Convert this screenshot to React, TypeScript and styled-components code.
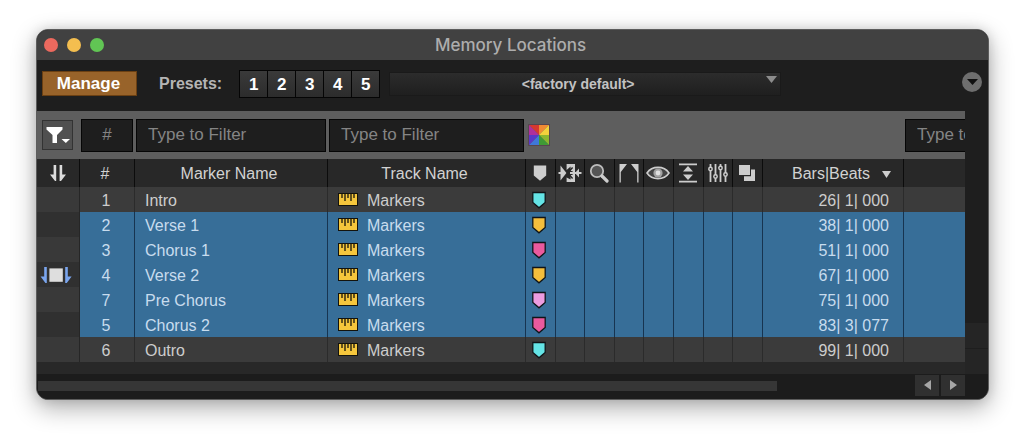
import React from "react";
import styled, { createGlobalStyle, css } from "styled-components";

const GlobalStyle = createGlobalStyle`
  *, *::before, *::after { box-sizing: border-box; }
  body {
    margin: 0;
    background: #fff;
    font-family: "Liberation Sans", Arial, sans-serif;
    font-size: 16px;
    color: #cdcdcd;
  }
  button, input, select { font: inherit; margin: 0; }
  svg { display: block; }
`;

const Page = styled.main`
  padding: 29px 35px 42px 36px;
`;

const Window = styled.section`
  overflow: hidden;
  border: 1px solid #5c5c5c;
  border-radius: 12px;
  background: #1e1e1e;
  box-shadow: 0 8px 24px rgba(0, 0, 0, 0.32), 0 0 12px rgba(0, 0, 0, 0.12);
`;

const TitleBar = styled.header`
  position: relative;
  display: flex;
  align-items: center;
  justify-content: center;
  height: 30px;
  padding-right: 4px;
  background: #414141;
`;

const Title = styled.h1`
  margin: 0;
  font: 500 17px/28px Inter, "Liberation Sans", sans-serif;
  color: #adadad;
`;

const Lights = styled.div`
  position: absolute;
  left: 7px;
  top: 8px;
  display: flex;
  gap: 9px;
`;

const Light = styled.button<{ $color: string }>`
  width: 14px;
  height: 14px;
  padding: 0;
  border: 0;
  border-radius: 50%;
  background: ${(p) => p.$color};
`;

const Toolbar = styled.div`
  display: flex;
  align-items: center;
  height: 51px;
  padding: 0 6px 4px 5px;
`;

const ManageButton = styled.button`
  width: 95px;
  height: 25px;
  padding: 0 2px 0 0;
  border: 1px solid #6b4013;
  background: #98632a;
  color: #fff;
  font-size: 17px;
  font-weight: bold;
  line-height: 23px;
`;

const PresetsLabel = styled.span`
  margin: 0 17px 0 22px;
  font-weight: bold;
  color: #b4b4b4;
`;

const PresetGroup = styled.div`
  display: flex;
  gap: 1px;
  padding: 1px;
  background: #050505;
`;

const PresetButton = styled.button`
  width: 27px;
  height: 26px;
  padding: 2px 0 0;
  border: 0;
  background: linear-gradient(#3a3a3a, #2c2c2c);
  color: #fff;
  font-size: 17px;
  font-weight: bold;
  line-height: 24px;
`;

const PresetPicker = styled.label`
  display: grid;
  flex: 0 1 392px;
  margin-left: 9px;
  > * { grid-area: 1 / 1; }
  > svg { justify-self: end; margin: 4px 4px 0 0; pointer-events: none; }
`;

const PresetSelect = styled.select`
  width: 100%;
  height: 24px;
  padding: 0 14px 0 0;
  appearance: none;
  border: 1px solid #1a1a1a;
  border-radius: 0;
  background: linear-gradient(#2c2c2c, #1f1f1f);
  color: #c2c2c2;
  font-size: 14px;
  font-weight: bold;
  text-align: center;
  text-align-last: center;
`;

const MenuButton = styled.button`
  display: grid;
  place-items: center;
  width: 20px;
  height: 20px;
  margin: 0 0 4px auto;
  padding: 0;
  border: 0;
  border-radius: 50%;
  background: #6e6e6e;
`;

const Body = styled.div`
  display: grid;
  grid-template-columns: minmax(0, 1fr) 23px;
`;

const Pane = styled.div`
  min-width: 0;
  overflow: hidden;
  padding-bottom: 12px;
  background: #282828;
`;

const Table = styled.table`
  width: 100%;
  table-layout: fixed;
  border-collapse: separate;
  border-spacing: 0;
`;

const FilterCell = styled.td<{ $gutter?: boolean }>`
  height: 48px;
  overflow: hidden;
  padding: 0 2px 0 ${(p) => (p.$gutter ? "5px" : "1px")};
  background: #5e5e5e;
  white-space: nowrap;
`;

const FilterInput = styled.input<{ $short?: boolean; $wide?: boolean }>`
  display: block;
  width: ${(p) => (p.$wide ? "188px" : "100%")};
  height: 33px;
  padding: 0 ${(p) => (p.$short ? "0" : "11px")};
  border: 1px solid #060606;
  border-radius: 0;
  background: #1e1e1e;
  color: #c8c8c8;
  font-size: 17px;
  text-align: ${(p) => (p.$short ? "center" : "left")};
  &::placeholder { color: #858585; opacity: 1; }
`;

const FilterButton = styled.button`
  display: block;
  width: 31px;
  height: 30px;
  padding: 0;
  border: 1px solid #333;
  background: #505050;
`;

const SwatchButton = styled.button`
  display: block;
  padding: 0 0 0 1px;
  border: 0;
  background: none;
`;

const HeadCell = styled.th<{ $kind?: "icon" | "sorted" }>`
  height: 28px;
  padding: ${(p) =>
    p.$kind === "sorted" ? "2px 12px 0 0" : p.$kind === "icon" ? "0 1px 0 0" : "2px 4px 0 0"};
  border-right: 1px solid #0c0c0c;
  background: #282828;
  color: #d2d2d2;
  font-weight: normal;
  &:last-child { border-right: 0; }
  svg { margin: 0 auto; }
`;

const SortButton = styled.button`
  display: flex;
  align-items: center;
  justify-content: flex-end;
  gap: 12px;
  width: 100%;
  padding: 0;
  border: 0;
  background: none;
  color: inherit;
  svg { margin: 0; }
`;

const Cell = styled.td`
  height: 25px;
  overflow: hidden;
  padding: 2px 0 0;
  border-right: 1px solid #2b2b2b;
  background: #3b3b3b;
  white-space: nowrap;
  line-height: 23px;
  &:last-child { border-right: 0; }
`;

const GutterCell = styled.td<{ $dark: boolean }>`
  height: 25px;
  padding: 0 0 0 3px;
  border-right: 1px solid #262626;
  background: ${(p) => (p.$dark ? "#303030" : "#393939")};
`;

const NumberCell = styled(Cell)`
  padding-right: 2px;
  text-align: center;
`;

const TextCell = styled(Cell)`
  padding-left: 10px;
`;

const TimeCell = styled(Cell)`
  padding-right: 14px;
  text-align: right;
`;

const IconCell = styled(Cell)`
  padding: 0 3px 0 0;
  svg { margin: 0 auto; }
`;

const Row = styled.tr<{ $selected: boolean }>`
  ${(p) =>
    p.$selected &&
    css`
      color: #c8dcee;
      ${Cell} {
        background: #376e98;
        border-right-color: #173450;
      }
    `}
`;

const Track = styled.span`
  display: flex;
  align-items: center;
  gap: 9px;
  > svg { margin-bottom: 2px; }
`;

const VerticalBar = styled.div`
  display: flex;
  flex-direction: column;
  justify-content: flex-end;
  gap: 1px;
  background: #1e1e1e;
`;

const VerticalButton = styled.button`
  height: 25px;
  padding: 0;
  border: 0;
  background: #252525;
`;

const HorizontalBar = styled.div`
  display: flex;
  align-items: center;
  gap: 2px;
  height: 25px;
  padding: 0 23px 3px 0;
  background: #1c1c1c;
`;

const Groove = styled.div`
  flex: 1;
  padding: 2px 136px 0 1px;
`;

const Thumb = styled.div`
  height: 10px;
  background: #363636;
`;

const StepButton = styled.button`
  display: grid;
  place-items: center;
  width: 24px;
  height: 21px;
  padding: 0;
  border: 0;
  background: #303030;
`;

const Chevron = ({ w, h, fill }: { w: number; h: number; fill: string }) => (
  <svg width={w} height={h} viewBox="0 0 10 6" preserveAspectRatio="none">
    <path d="M0 0H10L5 6Z" fill={fill} />
  </svg>
);

const RangeArrows = () => (
  <svg width="18" height="16" viewBox="0 0 18 16" fill="#dcdcdc">
    <path d="M4.6 0H7.2V16H6L1 9.5H4.6Z" />
    <path d="M10.6 0H13.2V9.5H17L12 16H10.6Z" />
  </svg>
);

const Playhead = () => (
  <svg width="33" height="18" viewBox="0 0 33 18">
    <path d="M4.2 1H6.8V17H5.4L0.6 10.5H4.2Z" fill="#7aa5ee" />
    <rect x="9.4" y="2.4" width="13.4" height="13.4" fill="#dedede" />
    <path d="M25.2 1H27.8V10.5H31.6L26.8 17H25.2Z" fill="#7aa5ee" />
  </svg>
);

const Marker = ({ color, outline }: { color: string; outline?: boolean }) => (
  <svg width="16" height="18" viewBox="0 0 16 18">
    <path
      d="M1.8 1.5H14.2V11.5L8 16.8L1.8 11.5Z"
      fill={color}
      stroke={outline ? "#101418" : "none"}
      strokeWidth="1.3"
    />
  </svg>
);

const Ruler = () => (
  <svg width="20" height="13" viewBox="0 0 20 13">
    <rect x="0.5" y="0.5" width="19" height="12" fill="#f5c63c" stroke="#14130c" />
    <path d="M4 1V5M7 1V8M10 1V5M13 1V8M16 1V5" stroke="#14130c" strokeWidth="1.3" />
  </svg>
);

const Funnel = () => (
  <svg width="29" height="28" viewBox="0 0 29 28" fill="#fff">
    <path d="M3.5 6H19.5V8.5L14 14V22H9.5V14L3.5 8.5Z" />
    <path d="M18.5 18H27L22.8 22Z" />
  </svg>
);

const Swatch = () => (
  <svg width="22" height="22" viewBox="0 0 22 22">
    <path d="M11 11L1 1H11Z" fill="#d7382f" />
    <path d="M11 11V1H21Z" fill="#f08a32" />
    <path d="M11 11L21 1V11Z" fill="#f3d13c" />
    <path d="M11 11H21V21Z" fill="#8db72f" />
    <path d="M11 11L21 21H11Z" fill="#3f9a35" />
    <path d="M11 11V21H1Z" fill="#3f78d8" />
    <path d="M11 11L1 21V11Z" fill="#5a37c8" />
    <path d="M11 11H1V1Z" fill="#b02f9c" />
    <rect x="0.5" y="0.5" width="21" height="21" fill="none" stroke="#57454f" />
  </svg>
);

const Selection = () => (
  <svg width="24" height="20" viewBox="0 0 24 20">
    <path d="M8.6 1H17V19H8.6V14.5L12.6 16.5V12H14.6V8H12.6V3.5L8.6 7Z" fill="#cdcdcd" />
    <path d="M14.6 4.5L9.6 10L14.6 15.5" fill="none" stroke="#282828" strokeWidth="1.4" />
    <path d="M2.5 2.5L8.4 10L2.5 17.5Z" fill="#cdcdcd" />
    <path d="M0.5 10H4M12 10H23.5" stroke="#cdcdcd" strokeWidth="2" />
    <path d="M17 10L21 5.5V14.5Z" fill="#cdcdcd" />
  </svg>
);

const Zoom = () => (
  <svg width="20" height="20" viewBox="0 0 20 20" fill="none">
    <circle cx="8" cy="8" r="6.2" fill="#555" stroke="#bdbdbd" strokeWidth="1.8" />
    <path d="M13 13L18 18" stroke="#cdcdcd" strokeWidth="3.2" strokeLinecap="round" />
  </svg>
);

const PrePostRoll = () => (
  <svg width="20" height="20" viewBox="0 0 20 20" fill="#cdcdcd">
    <path d="M0.5 1H8L1.8 9V19.5H0.5Z" />
    <path d="M19.5 1H12L18.2 9V19.5H19.5Z" />
  </svg>
);

const Visibility = () => (
  <svg width="24" height="14" viewBox="0 0 24 14">
    <path d="M1 7C6 -0.5 18 -0.5 23 7C18 14.5 6 14.5 1 7Z" fill="#444" stroke="#cdcdcd" strokeWidth="1.6" />
    <circle cx="12" cy="7" r="4.6" fill="#a2a2a2" />
    <circle cx="12" cy="7" r="2.4" fill="#e0e0e0" />
  </svg>
);

const TrackHeight = () => (
  <svg width="20" height="20" viewBox="0 0 20 20" fill="#cdcdcd">
    <path d="M1 0.5H19V2.2H1ZM1 17.8H19V19.5H1Z" />
    <path d="M10 3L15 8.6H5ZM10 17L15 11.4H5Z" />
  </svg>
);

const Faders = () => (
  <svg width="20" height="20" viewBox="0 0 20 20" fill="#282828" stroke="#cdcdcd" strokeWidth="1.5">
    <path d="M2.5 1V19M7.5 1V19M12.5 1V19M17.5 1V19" strokeWidth="1.8" />
    <circle cx="2.5" cy="6" r="1.7" />
    <circle cx="7.5" cy="13.5" r="1.7" />
    <circle cx="12.5" cy="5" r="1.7" />
    <circle cx="17.5" cy="11.5" r="1.7" />
  </svg>
);

const WindowConfig = () => (
  <svg width="18" height="18" viewBox="0 0 18 18" fill="#cdcdcd">
    <path d="M1 1H12V11H1Z" />
    <path d="M13 5.5H17V17H6V12.2H13Z" />
  </svg>
);

const widths = [43, 55, 193, 198, 30, 29, 30, 29, 30, 30, 29, 30, 141];

const iconColumns = [
  { label: "Marker color", icon: <Marker color="#cdcdcd" /> },
  { label: "Selection", icon: <Selection /> },
  { label: "Zoom settings", icon: <Zoom /> },
  { label: "Pre/post roll", icon: <PrePostRoll /> },
  { label: "Track visibility", icon: <Visibility /> },
  { label: "Track heights", icon: <TrackHeight /> },
  { label: "Group enables", icon: <Faders /> },
  { label: "Window configuration", icon: <WindowConfig /> },
];

const rows = [
  { id: 1, name: "Intro", color: "#64e4e6", time: "26| 1| 000", selected: false },
  { id: 2, name: "Verse 1", color: "#f4be3c", time: "38| 1| 000", selected: true },
  { id: 3, name: "Chorus 1", color: "#ea5a9e", time: "51| 1| 000", selected: true },
  { id: 4, name: "Verse 2", color: "#f4be3c", time: "67| 1| 000", selected: true, current: true },
  { id: 7, name: "Pre Chorus", color: "#ec9ce0", time: "75| 1| 000", selected: true },
  { id: 5, name: "Chorus 2", color: "#ea5a9e", time: "83| 3| 077", selected: true },
  { id: 6, name: "Outro", color: "#64e4e6", time: "99| 1| 000", selected: false },
];

export default function App() {
  return (
    <Page>
      <GlobalStyle />
      <Window>
        <TitleBar>
          <Lights>
            <Light $color="#ec695e" aria-label="Close" />
            <Light $color="#f4be4f" aria-label="Minimize" />
            <Light $color="#61c554" aria-label="Zoom" />
          </Lights>
          <Title>Memory Locations</Title>
        </TitleBar>

        <Toolbar>
          <ManageButton>Manage</ManageButton>
          <PresetsLabel id="presets">Presets:</PresetsLabel>
          <PresetGroup role="group" aria-labelledby="presets">
            {[1, 2, 3, 4, 5].map((n) => (
              <PresetButton key={n}>{n}</PresetButton>
            ))}
          </PresetGroup>
          <PresetPicker>
            <PresetSelect aria-label="Preset">
              <option>&lt;factory default&gt;</option>
            </PresetSelect>
            <Chevron w={11} h={7} fill="#8c8c8c" />
          </PresetPicker>
          <MenuButton aria-label="Window menu">
            <Chevron w={11} h={6} fill="#101010" />
          </MenuButton>
        </Toolbar>

        <Body>
          <Pane>
            <Table>
              <colgroup>
                {widths.map((w, i) => (
                  <col key={i} width={w} />
                ))}
                <col />
              </colgroup>
              <thead>
                <tr>
                  <FilterCell $gutter>
                    <FilterButton aria-label="Filter options">
                      <Funnel />
                    </FilterButton>
                  </FilterCell>
                  <FilterCell>
                    <FilterInput $short placeholder="#" aria-label="Filter by number" />
                  </FilterCell>
                  <FilterCell>
                    <FilterInput placeholder="Type to Filter" aria-label="Filter by marker name" />
                  </FilterCell>
                  <FilterCell>
                    <FilterInput placeholder="Type to Filter" aria-label="Filter by track name" />
                  </FilterCell>
                  <FilterCell>
                    <SwatchButton aria-label="Filter by color">
                      <Swatch />
                    </SwatchButton>
                  </FilterCell>
                  <FilterCell colSpan={8} />
                  <FilterCell>
                    <FilterInput $wide placeholder="Type to Filter" aria-label="Filter by comments" />
                  </FilterCell>
                </tr>
                <tr>
                  <HeadCell $kind="icon" aria-label="Play position">
                    <RangeArrows />
                  </HeadCell>
                  <HeadCell>#</HeadCell>
                  <HeadCell>Marker Name</HeadCell>
                  <HeadCell>Track Name</HeadCell>
                  {iconColumns.map((c) => (
                    <HeadCell key={c.label} $kind="icon" aria-label={c.label}>
                      {c.icon}
                    </HeadCell>
                  ))}
                  <HeadCell $kind="sorted" aria-sort="descending">
                    <SortButton>
                      Bars|Beats
                      <Chevron w={9} h={7} fill="#cdcdcd" />
                    </SortButton>
                  </HeadCell>
                  <HeadCell aria-label="Comments" />
                </tr>
              </thead>
              <tbody>
                {rows.map((r, i) => (
                  <Row key={r.id} $selected={r.selected}>
                    <GutterCell $dark={i % 2 === 1}>{r.current && <Playhead />}</GutterCell>
                    <NumberCell>{r.id}</NumberCell>
                    <TextCell>{r.name}</TextCell>
                    <TextCell>
                      <Track>
                        <Ruler />
                        Markers
                      </Track>
                    </TextCell>
                    <IconCell>
                      <Marker color={r.color} outline />
                    </IconCell>
                    {iconColumns.slice(1).map((c) => (
                      <Cell key={c.label} />
                    ))}
                    <TimeCell>{r.time}</TimeCell>
                    <Cell />
                  </Row>
                ))}
              </tbody>
            </Table>
          </Pane>
          <VerticalBar>
            <VerticalButton aria-label="Scroll up" />
            <VerticalButton aria-label="Scroll down" />
          </VerticalBar>
        </Body>

        <HorizontalBar>
          <Groove>
            <Thumb />
          </Groove>
          <StepButton aria-label="Scroll left">
            <svg width="7" height="10" viewBox="0 0 7 10">
              <path d="M7 0V10L0 5Z" fill="#a6a6a6" />
            </svg>
          </StepButton>
          <StepButton aria-label="Scroll right">
            <svg width="7" height="10" viewBox="0 0 7 10">
              <path d="M0 0V10L7 5Z" fill="#a6a6a6" />
            </svg>
          </StepButton>
        </HorizontalBar>
      </Window>
    </Page>
  );
}
